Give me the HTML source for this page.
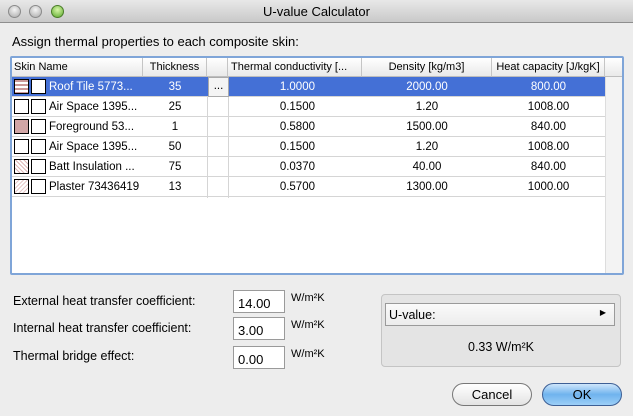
<!DOCTYPE html>
<html><head><style>
*{box-sizing:border-box;margin:0;padding:0}
body{width:633px;height:416px;background:#ededed;font-family:"Liberation Sans",sans-serif;font-size:12px;color:#000;position:relative;overflow:hidden}
.abs{position:absolute}
#title{left:0;top:0;width:633px;height:23px;background:linear-gradient(#e8e8e8,#c9c9c9);border-bottom:1px solid #8e8e8e;text-align:center;line-height:23px;font-size:13px}
.tl{top:5px;width:13px;height:13px;border-radius:50%;background:radial-gradient(circle at 50% 35%,#f4f4f4,#a9a9a9);border:1px solid #8a8a8a}
#frame{left:10px;top:56px;width:614px;height:219px;border:2px solid #7fa5d8;border-radius:2px;background:#fff}
.hdr{top:0;height:19px;background:linear-gradient(#fff,#e9e9e9);border-bottom:1px solid #bdbdbd;border-right:1px solid #c5c5c5;line-height:18px;font-size:11px;white-space:nowrap;overflow:hidden}
.row{left:0;width:593px;height:20px;border-bottom:1px solid #d5d5d5;font-size:11.5px;line-height:20px}
.row.sel{background:#4470d6;color:#fff}
.c{position:absolute;top:0;height:19px}
.vl{position:absolute;top:19px;width:1px;height:121px;background:#d5d5d5}
.sw{position:absolute;top:2px;width:15px;height:15px;border:1px solid #000;background:#fff}
.lbl{left:13px;font-size:12.5px}
.inp{left:233px;width:52px;height:23px;background:#fff;border:1px solid #9a9a9a;font-size:13px;padding:5px 0 0 4px}
.unit{left:291px;font-size:11px}
.btn{top:383px;height:23px;border-radius:12px;border:1px solid #777;text-align:center;line-height:21px;font-size:13px}
.tc{left:216px;width:134px;text-align:right;padding-right:47px}
</style></head><body>
<div id="title" class="abs">U-value Calculator</div>
<div class="abs tl" style="left:8px"></div>
<div class="abs tl" style="left:29px"></div>
<div class="abs tl" style="left:51px;background:radial-gradient(circle at 50% 35%,#d8f7a8,#5aa82c);border-color:#4b7d2a"></div>
<div class="abs" style="left:12px;top:34px;font-size:13px">Assign thermal properties to each composite skin:</div>
<div id="frame" class="abs">
 <div class="abs hdr" style="left:0;width:131px;padding-left:2px">Skin Name</div>
 <div class="abs hdr" style="left:131px;width:64px;text-align:center">Thickness</div>
 <div class="abs hdr" style="left:195px;width:21px"></div>
 <div class="abs hdr" style="left:216px;width:134px;padding-left:3px">Thermal conductivity [...</div>
 <div class="abs hdr" style="left:350px;width:130px;text-align:center">Density [kg/m3]</div>
 <div class="abs hdr" style="left:480px;width:113px;text-align:center">Heat capacity [J/kgK]</div>
 <div class="abs hdr" style="left:593px;width:17px;border-right:none"></div>
 <div class="vl" style="left:195px"></div>
 <div class="vl" style="left:216px"></div>
 <div class="abs" style="left:593px;top:19px;width:17px;height:196px;background:#f3f3f3;border-left:1px solid #ddd"></div>

 <div class="abs row sel" style="top:19px"><div class="sw" style="left:2px;background:repeating-linear-gradient(#c99 0 2px,#fff 2px 4px)"></div><div class="sw" style="left:19px"></div><span class="c" style="left:37px">Roof Tile 5773...</span><span class="c" style="left:131px;width:64px;text-align:center">35</span><span class="c" style="left:196px;top:0;width:21px;height:20px;background:#f4f4f4;border:1px solid #aaa;color:#000;text-align:center;line-height:16px">...</span><span class="c tc">1.0000</span><span class="c" style="left:350px;width:130px;text-align:center">2000.00</span><span class="c" style="left:480px;width:113px;text-align:center">800.00</span></div>

 <div class="abs row" style="top:39px"><div class="sw" style="left:2px"></div><div class="sw" style="left:19px"></div><span class="c" style="left:37px">Air Space 1395...</span><span class="c" style="left:131px;width:64px;text-align:center">25</span><span class="c tc">0.1500</span><span class="c" style="left:350px;width:130px;text-align:center">1.20</span><span class="c" style="left:480px;width:113px;text-align:center">1008.00</span></div>

 <div class="abs row" style="top:59px"><div class="sw" style="left:2px;background:#d2a6a6"></div><div class="sw" style="left:19px"></div><span class="c" style="left:37px">Foreground 53...</span><span class="c" style="left:131px;width:64px;text-align:center">1</span><span class="c tc">0.5800</span><span class="c" style="left:350px;width:130px;text-align:center">1500.00</span><span class="c" style="left:480px;width:113px;text-align:center">840.00</span></div>

 <div class="abs row" style="top:79px"><div class="sw" style="left:2px"></div><div class="sw" style="left:19px"></div><span class="c" style="left:37px">Air Space 1395...</span><span class="c" style="left:131px;width:64px;text-align:center">50</span><span class="c tc">0.1500</span><span class="c" style="left:350px;width:130px;text-align:center">1.20</span><span class="c" style="left:480px;width:113px;text-align:center">1008.00</span></div>

 <div class="abs row" style="top:99px"><div class="sw" style="left:2px;background:repeating-linear-gradient(45deg,#e0b8b8 0 1px,#fff 1px 3px)"></div><div class="sw" style="left:19px"></div><span class="c" style="left:37px">Batt Insulation ...</span><span class="c" style="left:131px;width:64px;text-align:center">75</span><span class="c tc">0.0370</span><span class="c" style="left:350px;width:130px;text-align:center">40.00</span><span class="c" style="left:480px;width:113px;text-align:center">840.00</span></div>

 <div class="abs row" style="top:119px"><div class="sw" style="left:2px;background:repeating-linear-gradient(-45deg,#e8c8c8 0 1px,#fff 1px 3px)"></div><div class="sw" style="left:19px"></div><span class="c" style="left:37px">Plaster 73436419</span><span class="c" style="left:131px;width:64px;text-align:center">13</span><span class="c tc">0.5700</span><span class="c" style="left:350px;width:130px;text-align:center">1300.00</span><span class="c" style="left:480px;width:113px;text-align:center">1000.00</span></div>
</div>

<div class="abs lbl" style="top:294px">External heat transfer coefficient:</div>
<div class="abs lbl" style="top:321px">Internal heat transfer coefficient:</div>
<div class="abs lbl" style="top:349px">Thermal bridge effect:</div>
<div class="abs inp" style="top:290px">14.00</div>
<div class="abs inp" style="top:317px">3.00</div>
<div class="abs inp" style="top:346px">0.00</div>
<div class="abs unit" style="top:292px">W/m²K</div>
<div class="abs unit" style="top:319px">W/m²K</div>
<div class="abs unit" style="top:348px">W/m²K</div>

<div class="abs" style="left:381px;top:294px;width:240px;height:73px;border:1px solid #c4c4c4;border-radius:4px;background:#e4e4e4"></div>
<div class="abs" style="left:385px;top:303px;width:230px;height:23px;border:1px solid #9a9a9a;background:linear-gradient(#fafafa,#ececec);padding:4px 0 0 3px;font-size:12.5px">U-value:<span style="position:absolute;right:8px;top:4px;font-size:8px">▶</span></div>
<div class="abs" style="left:381px;top:340px;width:240px;text-align:center;font-size:12.5px">0.33 W/m²K</div>

<div class="abs btn" style="left:452px;width:80px;background:linear-gradient(#fff,#e3e3e3)">Cancel</div>
<div class="abs btn" style="left:542px;width:80px;background:linear-gradient(#cfe6fb,#6fb3ee 50%,#9ccff7);border-color:#3d5f95">OK</div>
</body></html>
